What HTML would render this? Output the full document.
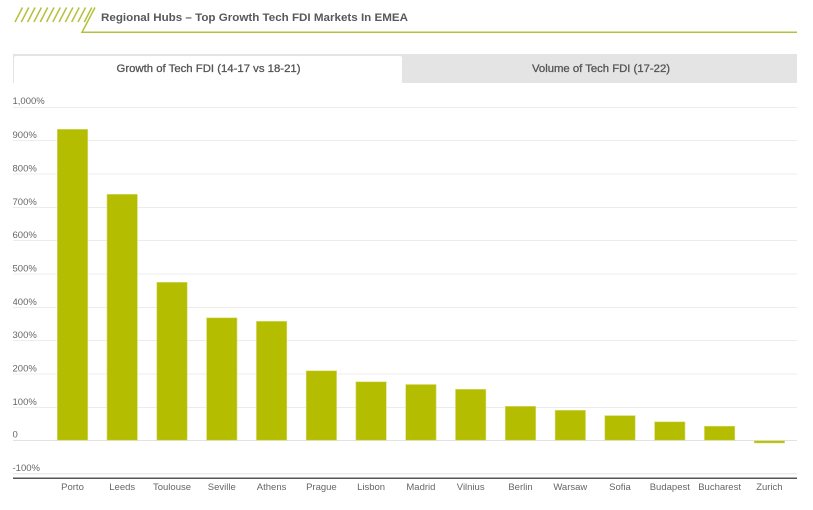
<!DOCTYPE html>
<html><head><meta charset="utf-8"><style>
html,body{margin:0;padding:0;background:#fff;width:813px;height:510px;overflow:hidden}
svg{display:block}
text{font-family:"Liberation Sans",sans-serif}
.y{font-size:9.5px;fill:#666}
.x{font-size:9.5px;fill:#666;text-anchor:middle}
</style></head><body>
<svg width="813" height="510" viewBox="0 0 813 510" xmlns="http://www.w3.org/2000/svg">
<defs><clipPath id="c"><rect x="13" y="90" width="60" height="390"/></clipPath></defs>
<g stroke="#b5c13c" fill="none">
<path stroke-width="1.5" d="M15 22L22.500 7.500M21.300 22L28.800 7.500M27.600 22L35.100 7.500M33.900 22L41.400 7.500M40.200 22L47.700 7.500M46.500 22L54 7.500M52.800 22L60.300 7.500M59.100 22L66.600 7.500M65.400 22L72.900 7.500M71.700 22L79.200 7.500M78 22L85.500 7.500M84.300 22L91.800 7.500"/>
<path stroke-width="1.500" d="M95 7.500L82 32.300H797"/>
</g>
<text x="101" y="21" font-size="11" font-weight="bold" fill="#58595b" textLength="307" lengthAdjust="spacingAndGlyphs">Regional Hubs – Top Growth Tech FDI Markets In EMEA</text>

<rect x="13" y="54" width="784" height="29" fill="#e4e4e4"/>
<path d="M14 83V58q0-2 2-2H400q2 0 2 2V83Z" fill="#fff"/>
<text x="208.500" y="72" font-size="11" fill="#555" text-anchor="middle" textLength="184" lengthAdjust="spacingAndGlyphs" stroke="#555" stroke-width=".3">Growth of Tech FDI (14-17 vs 18-21)</text>
<text x="601" y="72" font-size="11" fill="#555" text-anchor="middle" textLength="138" lengthAdjust="spacingAndGlyphs" stroke="#555" stroke-width=".3">Volume of Tech FDI (17-22)</text>

<g fill="#ececec">
<rect x="13" y="107" width="784" height="1"/><rect x="13" y="140" width="784" height="1"/><rect x="13" y="173.500" width="784" height="1"/><rect x="13" y="207" width="784" height="1"/><rect x="13" y="240" width="784" height="1"/><rect x="13" y="273.500" width="784" height="1"/><rect x="13" y="307" width="784" height="1"/><rect x="13" y="340" width="784" height="1"/><rect x="13" y="373.500" width="784" height="1"/><rect x="13" y="407" width="784" height="1"/><rect x="13" y="440" width="784" height="1" fill="#e2e2e2"/><rect x="13" y="473" width="784" height="1.500"/>
</g>
<rect x="13" y="477.500" width="784" height="1.500" fill="#555"/>

<g fill="#b5bd00" stroke="#d8dc7a" stroke-width=".6">
<rect x="57.300" y="129.300" width="30.400" height="310.900"/>
<rect x="107" y="194.300" width="30.400" height="245.900"/>
<rect x="156.800" y="282.300" width="30.400" height="157.900"/>
<rect x="206.600" y="317.800" width="30.400" height="122.400"/>
<rect x="256.400" y="321.300" width="30.400" height="118.900"/>
<rect x="306.200" y="370.800" width="30.400" height="69.400"/>
<rect x="355.900" y="381.800" width="30.400" height="58.400"/>
<rect x="405.700" y="384.500" width="30.400" height="55.700"/>
<rect x="455.500" y="389.300" width="30.400" height="50.900"/>
<rect x="505.300" y="406.300" width="30.400" height="33.900"/>
<rect x="555.100" y="410.300" width="30.400" height="29.900"/>
<rect x="604.800" y="415.600" width="30.400" height="24.600"/>
<rect x="654.600" y="421.800" width="30.400" height="18.400"/>
<rect x="704.400" y="426.200" width="30.400" height="14"/>
<rect x="754.200" y="440.800" width="30.400" height="2.200"/>
</g>

<g clip-path="url(#c)">
<text class="y" x="12.500" y="104">1,000%</text>
<text class="y" x="12.500" y="138">900%</text>
<text class="y" x="12.500" y="171.500">800%</text>
<text class="y" x="12.500" y="205">700%</text>
<text class="y" x="12.500" y="238">600%</text>
<text class="y" x="12.500" y="271.500">500%</text>
<text class="y" x="12.500" y="305">400%</text>
<text class="y" x="12.500" y="338">300%</text>
<text class="y" x="12.500" y="371.500">200%</text>
<text class="y" x="12.500" y="405">100%</text>
<text class="y" x="12.500" y="437.500">0</text>
<text class="y" x="12.500" y="471">-100%</text>
</g>

<text class="x" x="72.500" y="490">Porto</text>
<text class="x" x="122.200" y="490">Leeds</text>
<text class="x" x="172" y="490">Toulouse</text>
<text class="x" x="221.800" y="490">Seville</text>
<text class="x" x="271.600" y="490">Athens</text>
<text class="x" x="321.400" y="490">Prague</text>
<text class="x" x="371.100" y="490">Lisbon</text>
<text class="x" x="420.900" y="490">Madrid</text>
<text class="x" x="470.700" y="490">Vilnius</text>
<text class="x" x="520.500" y="490">Berlin</text>
<text class="x" x="570.300" y="490">Warsaw</text>
<text class="x" x="620" y="490">Sofia</text>
<text class="x" x="669.800" y="490">Budapest</text>
<text class="x" x="719.600" y="490">Bucharest</text>
<text class="x" x="769.400" y="490">Zurich</text>
</svg>
</body></html>
